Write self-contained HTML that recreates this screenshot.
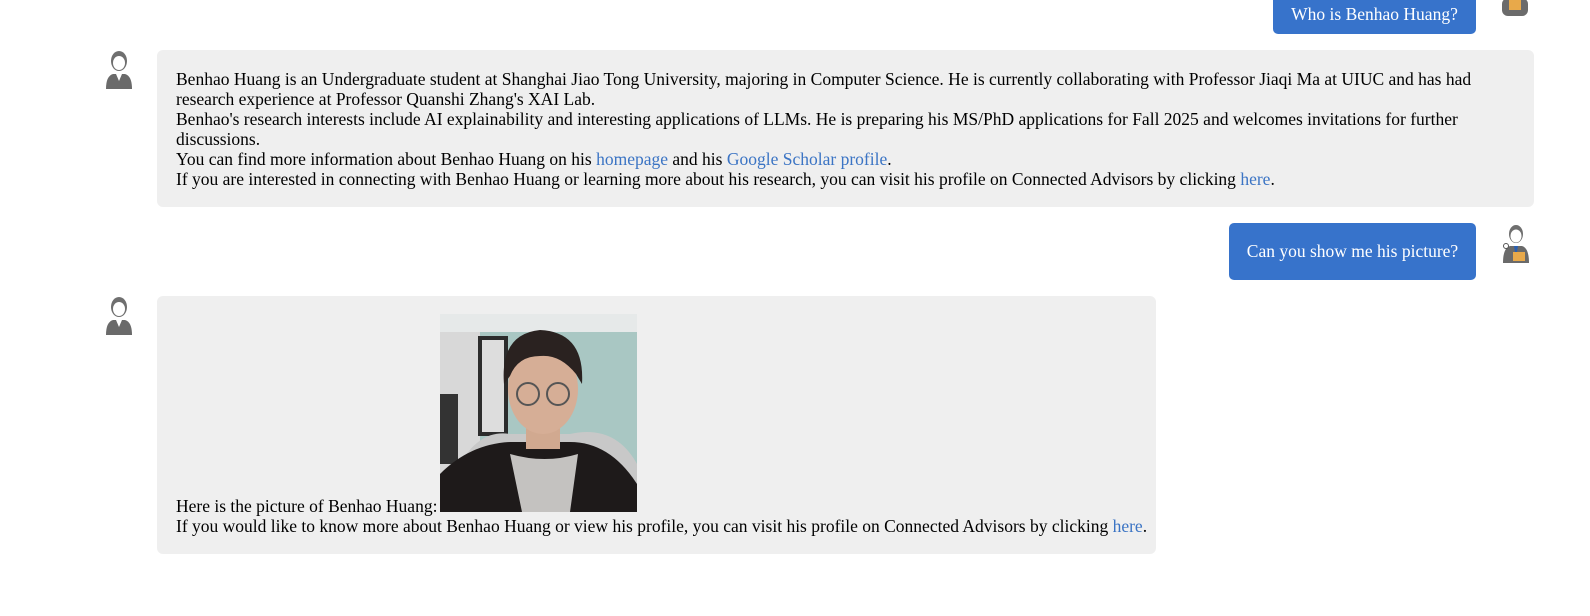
<!DOCTYPE html>
<html><head><meta charset="utf-8"><style>
html,body{margin:0;padding:0;background:#fff;width:1590px;height:616px;overflow:hidden;font-family:"Liberation Serif",serif;font-size:17.5px;line-height:20px;color:#000}
.b{position:absolute;background:#efefef;border-radius:6px;box-sizing:border-box;padding:19px 19px;white-space:nowrap}
.u{position:absolute;background:#3773cb;color:#fff;border-radius:5px;text-align:center;box-sizing:border-box;white-space:nowrap}
a{color:#3b74c4;text-decoration:none}
.av{position:absolute}
</style></head><body>
<div class="u" style="left:1273px;top:-20px;width:203px;height:54px;line-height:20px;padding-top:24px">Who is Benhao Huang?</div>
<svg class="av" style="left:1500px;top:-10px" width="32" height="28" viewBox="0 0 32 28"><rect x="2" y="8" width="26" height="18" rx="6" fill="#6b6b6b"/><rect x="9" y="10" width="12" height="10" fill="#e8a94a"/></svg>

<svg class="av" style="left:103px;top:48px" width="32" height="42" viewBox="0 0 32 42"><path d="M3 41 Q3 28 10 26 L22 26 Q29 28 29 41Z" fill="#6a6a6a"/><path d="M13 26 L16 33 L19 26Z" fill="#fff"/><ellipse cx="16" cy="13" rx="8" ry="10" fill="#6f6f6f"/><ellipse cx="16" cy="15" rx="6" ry="7" fill="#fff"/></svg>
<div class="b" style="left:157px;top:50px;width:1377px;height:157px;padding-top:19px">Benhao Huang is an Undergraduate student at Shanghai Jiao Tong University, majoring in Computer Science. He is currently collaborating with Professor Jiaqi Ma at UIUC and has had<br>research experience at Professor Quanshi Zhang's XAI Lab.<br>Benhao's research interests include AI explainability and interesting applications of LLMs. He is preparing his MS/PhD applications for Fall 2025 and welcomes invitations for further<br>discussions.<br>You can find more information about Benhao Huang on his <a>homepage</a> and his <a>Google Scholar profile</a>.<br>If you are interested in connecting with Benhao Huang or learning more about his research, you can visit his profile on Connected Advisors by clicking <a>here</a>.</div>

<div class="u" style="left:1229px;top:223px;width:247px;height:57px;line-height:57px">Can you show me his picture?</div>
<svg class="av" style="left:1500px;top:222px" width="32" height="42" viewBox="0 0 32 42"><path d="M3 41 Q3 26 10 24 L22 24 Q29 26 29 41Z" fill="#6a6a6a"/><path d="M14 24 L16 36 L18 24Z" fill="#2a5fb0"/><ellipse cx="16" cy="12" rx="7" ry="9" fill="#6f6f6f"/><ellipse cx="16" cy="14" rx="5.5" ry="6.5" fill="#fff"/><rect x="13" y="30" width="12" height="9" fill="#e8a94a"/><circle cx="6" cy="24" r="2.5" fill="#fff" stroke="#555"/></svg>

<svg class="av" style="left:103px;top:294px" width="32" height="42" viewBox="0 0 32 42"><path d="M3 41 Q3 28 10 26 L22 26 Q29 28 29 41Z" fill="#6a6a6a"/><path d="M13 26 L16 33 L19 26Z" fill="#fff"/><ellipse cx="16" cy="13" rx="8" ry="10" fill="#6f6f6f"/><ellipse cx="16" cy="15" rx="6" ry="7" fill="#fff"/></svg>
<div class="b" style="left:157px;top:296px;width:999px;height:258px;padding:0"></div>
<div style="position:absolute;left:176px;top:496px;white-space:nowrap">Here is the picture of Benhao Huang:</div>
<div style="position:absolute;left:176px;top:516px;white-space:nowrap">If you would like to know more about Benhao Huang or view his profile, you can visit his profile on Connected Advisors by clicking <a>here</a>.</div>
<svg style="position:absolute;left:440px;top:314px" width="197" height="198" viewBox="0 0 197 198">
<rect width="197" height="198" fill="#a9c7c3"/>
<rect x="0" y="0" width="40" height="198" fill="#d8d8d8"/>
<rect x="38" y="22" width="30" height="100" fill="#2c2c2c"/>
<rect x="42" y="26" width="22" height="92" fill="#ddd"/>
<rect x="0" y="0" width="197" height="18" fill="#e6e9e9"/>
<rect x="0" y="80" width="18" height="70" fill="#333"/>
<path d="M20 150 Q40 115 70 120 L130 120 Q175 110 197 150 L197 198 L0 198 L0 170Z" fill="#c8c8c8"/>
<path d="M0 160 Q30 130 70 128 L130 128 Q170 128 197 170 L197 198 L0 198Z" fill="#1e1a1a"/>
<path d="M70 140 L82 198 L130 198 L138 140 Q105 150 70 140Z" fill="#c4c2c0"/>
<rect x="86" y="95" width="34" height="40" fill="#d1a990"/>
<ellipse cx="103" cy="75" rx="35" ry="45" fill="#d6ae96"/>
<path d="M64 70 Q60 20 100 16 Q145 18 142 70 L136 60 Q120 40 100 42 Q78 42 70 62Z" fill="#2a2220"/>
<circle cx="88" cy="80" r="11" fill="none" stroke="#555" stroke-width="2"/>
<circle cx="118" cy="80" r="11" fill="none" stroke="#555" stroke-width="2"/>
</svg>
</body></html>
